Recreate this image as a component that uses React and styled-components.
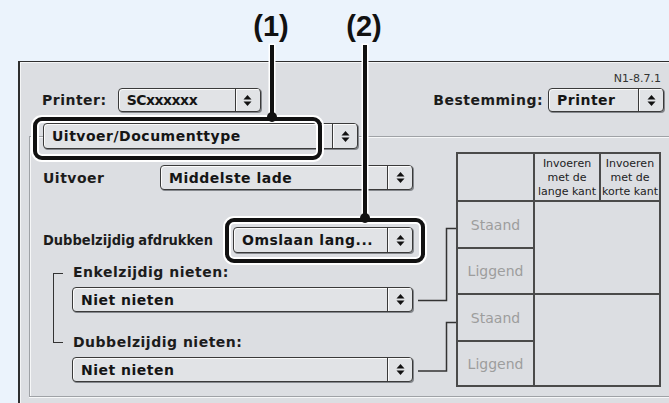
import React from "react";
import styled, { createGlobalStyle } from "styled-components";

const GlobalStyle = createGlobalStyle`
  body {
    margin: 0;
    background: #ebf3fc;
    font-family: "DejaVu Sans", Verdana, sans-serif;
  }
`;

const Stage = styled.div`
  position: relative;
  height: 403px;
  box-sizing: border-box;
  padding: 61px 0 0 18px;
  overflow: hidden;
`;

const Panel = styled.div`
  height: 342px;
  box-sizing: border-box;
  padding-top: 10px;
  background: #dcdee2;
  border-top: 1px solid #2e2e2e;
  border-left: 2px solid #2e2e2e;
  box-shadow: inset 1px 1px 0 #f4f5f6;
`;

const Version = styled.div`
  height: 14px;
  padding-right: 8px;
  text-align: right;
  font-size: 11px;
  line-height: 14px;
  color: #333;
`;

const HeaderRow = styled.div`
  display: flex;
  justify-content: space-between;
  align-items: center;
  height: 24px;
  margin-top: 2px;
  padding: 0 5px 0 22px;
`;

const Field = styled.div`
  display: flex;
  align-items: center;
  gap: ${(p) => p.$gap}px;
`;

const Label = styled.span`
  display: inline-block;
  width: ${(p) => (p.$w ? `${p.$w}px` : "auto")};
  font-family: ${(p) =>
    p.$condensed
      ? `"DejaVu Sans Condensed", "DejaVu Sans", sans-serif`
      : `"DejaVu Sans", Verdana, sans-serif`};
  font-size: ${(p) => (p.$condensed ? 14.5 : 14)}px;
  font-weight: bold;
  letter-spacing: ${(p) => (p.$condensed ? "0" : "0.5px")};
  word-spacing: ${(p) => (p.$condensed ? "-1px" : "0")};
  color: #1c1c1c;
  white-space: nowrap;
`;

const PopupBox = styled.div`
  display: flex;
  flex: none;
  width: ${(p) => p.$w}px;
  height: ${(p) => p.$h || 25}px;
  box-sizing: border-box;
  border: 1px solid #3a3a3a;
  border-radius: 4px;
  background: #e1e3e6;
  box-shadow: 1px 1px 0 #85888d, inset 1px 1px 0 #fbfbfb;
  overflow: hidden;
`;

const PopupText = styled.span`
  flex: 1;
  display: flex;
  align-items: center;
  padding-left: 8px;
  font-size: 14px;
  font-weight: bold;
  letter-spacing: ${(p) => p.$ls ?? 0.5}px;
  color: #151515;
  white-space: nowrap;
`;

const PopupArrows = styled.span`
  display: flex;
  align-items: center;
  justify-content: center;
  width: 24px;
  border-left: 1px solid #3a3a3a;
  box-shadow: inset 1px 1px 0 #fbfbfb;
`;

const Arrows = () => (
  <svg width="9" height="13" viewBox="0 0 9 13">
    <polygon points="0.5,5.5 4.5,1 8.5,5.5" fill="#111" />
    <polygon points="0.5,7.5 4.5,12 8.5,7.5" fill="#111" />
  </svg>
);

const Popup = ({ w, h, ls, children, className }) => (
  <PopupBox $w={w} $h={h} className={className}>
    <PopupText $ls={ls}>{children}</PopupText>
    <PopupArrows>
      <Arrows />
    </PopupArrows>
  </PopupBox>
);

const GroupBox = styled.div`
  height: 261px;
  box-sizing: border-box;
  margin: 24px 0 0 9px;
  padding-left: 13px;
  border-top: 1px solid #9fa2a6;
  border-left: 1px solid #9fa2a6;
  border-bottom: 1px solid #9fa2a6;
  box-shadow: inset 1px 1px 0 #f6f7f8, 0 1px 0 #f6f7f8;
`;

const TitlePopup = styled(Popup)`
  margin-top: -14px;
`;

const GroupBody = styled.div`
  display: flex;
  margin-top: 3px;
`;

const Form = styled.div`
  width: 370px;
  padding-top: 13px;
`;

const FormRow = styled.div`
  display: flex;
  align-items: center;
  margin-top: ${(p) => p.$top || 0}px;
`;

const Nieten = styled.div`
  display: flex;
  margin-top: 11px;
`;

const Bracket = styled.div`
  width: 10px;
  height: 70px;
  box-sizing: border-box;
  margin: 9px 0 0 10px;
  border: 1px solid #333;
  border-right: none;
`;

const NietenCol = styled.div`
  display: flex;
  flex-direction: column;
  margin-left: 9px;
`;

const SubLabel = styled(Label)`
  height: 16px;
  line-height: 16px;
  padding-left: 1px;
  margin-top: ${(p) => p.$top || 0}px;
`;

const Spaced = styled.div`
  margin-top: 7px;
`;

const Connectors = styled.svg`
  flex: none;
  width: 43px;
  height: 235px;
`;

const Table = styled.div`
  display: grid;
  grid-template-columns: 75px 64px 58px;
  grid-template-rows: 46px 45px 44px 45px 43px;
  gap: 2px;
  padding: 2px;
  background: #4a4a4a;
  width: 205px;
  height: 235px;
  box-sizing: border-box;
  align-self: flex-start;
`;

const Cell = styled.div`
  background: #dcdee2;
  grid-row: ${(p) => p.$row || "auto"};
  grid-column: ${(p) => p.$col || "auto"};
`;

const HeadCell = styled(Cell)`
  display: flex;
  align-items: flex-end;
  justify-content: center;
  padding-bottom: 1px;
  text-align: center;
  font-size: 11px;
  line-height: 14px;
  color: #222;
`;

const SideCell = styled(Cell)`
  display: flex;
  align-items: center;
  justify-content: center;
  font-size: 14px;
  color: #9d9d9d;
`;

const CalloutNum = styled.div`
  position: absolute;
  top: 12px;
  left: ${(p) => p.$x}px;
  transform: translateX(-50%);
  font-family: "Liberation Sans", Arial, sans-serif;
  font-weight: bold;
  font-size: 29px;
  line-height: 1;
  color: #111;
`;

const CalloutLine = styled.div`
  position: absolute;
  left: ${(p) => p.$x - 2}px;
  top: 45px;
  width: 4px;
  height: ${(p) => p.$to - 45}px;
  background: #111;
  box-shadow: 0 0 0 1.5px #fff;
`;

const CalloutDot = styled.div`
  position: absolute;
  left: ${(p) => p.$x - 5}px;
  top: ${(p) => p.$y - 5}px;
  width: 10px;
  height: 10px;
  border-radius: 50%;
  background: #111;
  z-index: 2;
`;

const CalloutBox = styled.div`
  position: absolute;
  left: ${(p) => p.$x}px;
  top: ${(p) => p.$y}px;
  width: ${(p) => p.$w}px;
  height: ${(p) => p.$h}px;
  box-sizing: border-box;
  border: 4px solid #111;
  border-radius: 9px;
  box-shadow: 0 0 0 2px #fff, inset 0 0 0 2px #fff;
  z-index: 1;
`;

const callouts = [
  { n: "(1)", x: 272, box: { x: 33, y: 117, w: 289, h: 43 } },
  { n: "(2)", x: 365, box: { x: 225, y: 218, w: 200, h: 45 } },
];

export default function App() {
  return (
    <>
      <GlobalStyle />
      <Stage>
        <Panel>
          <Version>N1-8.7.1</Version>
          <HeaderRow>
            <Field $gap={11}>
              <Label>Printer:</Label>
              <Popup w={143} h={24} ls={-0.5}>
                SCxxxxxx
              </Popup>
            </Field>
            <Field $gap={5}>
              <Label>Bestemming:</Label>
              <Popup w={116} h={24}>
                Printer
              </Popup>
            </Field>
          </HeaderRow>

          <GroupBox>
            <TitlePopup w={315} h={26}>
              Uitvoer/Documenttype
            </TitlePopup>
            <GroupBody>
              <Form>
                <FormRow>
                  <Label $w={117}>Uitvoer</Label>
                  <Popup w={253}>Middelste lade</Popup>
                </FormRow>
                <FormRow $top={37}>
                  <Label $w={190} $condensed>
                    Dubbelzijdig afdrukken
                  </Label>
                  <Popup w={180} h={26}>
                    Omslaan lang...
                  </Popup>
                </FormRow>
                <Nieten>
                  <Bracket />
                  <NietenCol>
                    <SubLabel>Enkelzijdig nieten:</SubLabel>
                    <Spaced>
                      <Popup w={341}>Niet nieten</Popup>
                    </Spaced>
                    <SubLabel $top={22}>Dubbelzijdig nieten:</SubLabel>
                    <Spaced>
                      <Popup w={341}>Niet nieten</Popup>
                    </Spaced>
                  </NietenCol>
                </Nieten>
              </Form>

              <Connectors viewBox="0 0 43 235">
                <path
                  d="M5 148.5 H33.5 V76.5 H43"
                  fill="none"
                  stroke="#333"
                  strokeWidth="1.5"
                />
                <path
                  d="M5 219 H33.5 V170.5 H43"
                  fill="none"
                  stroke="#333"
                  strokeWidth="1.5"
                />
              </Connectors>

              <Table>
                <Cell />
                <HeadCell>
                  Invoeren
                  <br />
                  met de
                  <br />
                  lange kant
                </HeadCell>
                <HeadCell>
                  Invoeren
                  <br />
                  met de
                  <br />
                  korte kant
                </HeadCell>
                <SideCell>Staand</SideCell>
                <Cell $row="2 / 4" $col="2 / 4" />
                <SideCell>Liggend</SideCell>
                <SideCell>Staand</SideCell>
                <Cell $row="4 / 6" $col="2 / 4" />
                <SideCell>Liggend</SideCell>
              </Table>
            </GroupBody>
          </GroupBox>
        </Panel>

        {callouts.map((c) => (
          <React.Fragment key={c.n}>
            <CalloutNum $x={c.x - 1}>{c.n}</CalloutNum>
            <CalloutLine $x={c.x} $to={c.box.y} />
            <CalloutDot $x={c.x} $y={c.box.y} />
            <CalloutBox
              $x={c.box.x}
              $y={c.box.y}
              $w={c.box.w}
              $h={c.box.h}
            />
          </React.Fragment>
        ))}
      </Stage>
    </>
  );
}
